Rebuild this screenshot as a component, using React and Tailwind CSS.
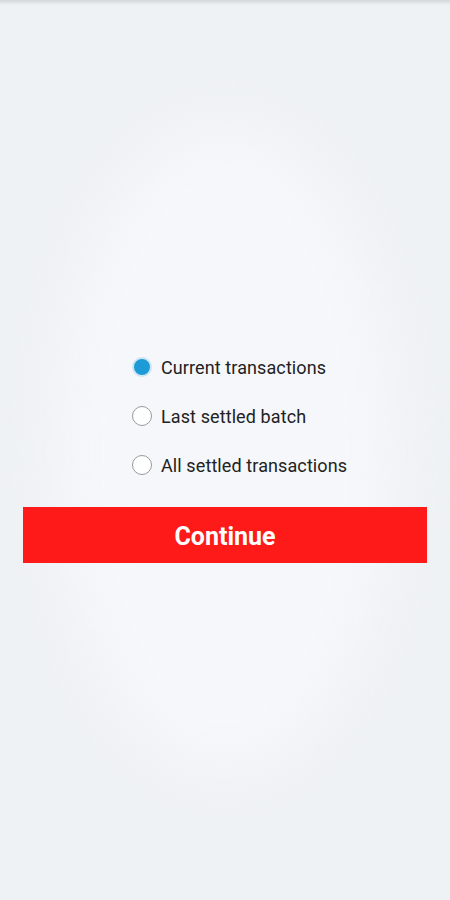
import React, { useState } from 'react';

const options = ['Current transactions', 'Last settled batch', 'All settled transactions'];

const App = () => {
  const [selected, setSelected] = useState(0);

  return (
    <div className="relative w-[450px] h-[900px] bg-[#eff2f5] overflow-hidden font-['Roboto',sans-serif]">
      <div className="absolute top-0 left-0 right-0 h-[5px] bg-gradient-to-b from-[#d3d6da] to-[#eff2f5]" />
      <div className="absolute left-[55px] top-[125px] w-[340px] h-[650px] rounded-[50%] bg-[#f5f7fa] blur-[30px]" />

      <div className="relative flex flex-col gap-[23px] pt-[354px] pl-[132px]">
        {options.map((label, idx) => (
          <button
            key={idx}
            onClick={() => setSelected(idx)}
            className="flex items-center h-[26px] text-left"
          >
            {selected === idx ? (
              <span className="w-[20px] h-[20px] rounded-full border-[2px] border-[#cde6f3] bg-[#1c9bd7] shrink-0" />
            ) : (
              <span className="w-[20px] h-[20px] rounded-full border-[1.5px] border-[#9a9a9a] bg-white shrink-0" />
            )}
            <span className="ml-[9px] text-[18px] tracking-[0.1px] text-[#222] whitespace-nowrap">{label}</span>
          </button>
        ))}
      </div>

      <div className="relative px-[23px] pt-[29px]">
        <button className="w-full h-[56px] pt-[3px] bg-[#ff1a1a] text-white text-[25px] font-bold">
          Continue
        </button>
      </div>
    </div>
  );
};

export default App;
